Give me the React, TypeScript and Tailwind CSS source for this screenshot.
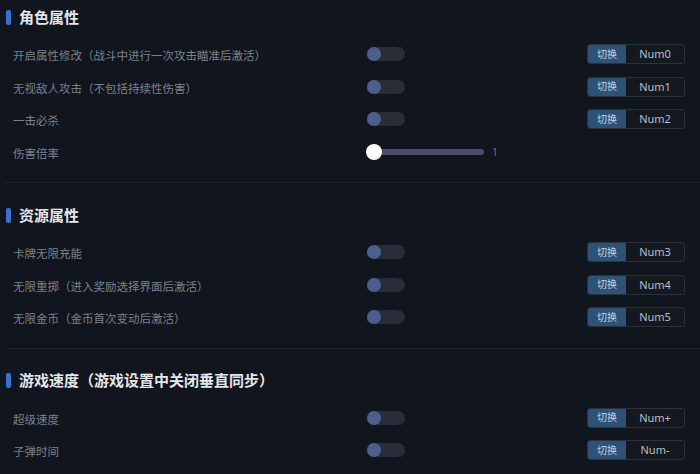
import React from 'react';

type Row =
  | { label: string; kind: 'toggle'; hotkey: string }
  | { label: string; kind: 'slider'; value: number };

const sections: { title: string; rows: Row[] }[] = [
  {
    title: '角色属性',
    rows: [
      { label: '开启属性修改（战斗中进行一次攻击瞄准后激活）', kind: 'toggle', hotkey: 'Num0' },
      { label: '无视敌人攻击（不包括持续性伤害）', kind: 'toggle', hotkey: 'Num1' },
      { label: '一击必杀', kind: 'toggle', hotkey: 'Num2' },
      { label: '伤害倍率', kind: 'slider', value: 1 },
    ],
  },
  {
    title: '资源属性',
    rows: [
      { label: '卡牌无限充能', kind: 'toggle', hotkey: 'Num3' },
      { label: '无限重掷（进入奖励选择界面后激活）', kind: 'toggle', hotkey: 'Num4' },
      { label: '无限金币（金币首次变动后激活）', kind: 'toggle', hotkey: 'Num5' },
    ],
  },
  {
    title: '游戏速度（游戏设置中关闭垂直同步）',
    rows: [
      { label: '超级速度', kind: 'toggle', hotkey: 'Num+' },
      { label: '子弹时间', kind: 'toggle', hotkey: 'Num-' },
    ],
  },
];

function Toggle() {
  return (
    <div className="w-[38px] h-[14px] rounded-full bg-[#292d37] flex items-center">
      <div className="w-[14px] h-[14px] rounded-full bg-[#4b5e8c]" />
    </div>
  );
}

function Hotkey({ keyName }: { keyName: string }) {
  return (
    <div className="flex h-[20px] w-[98px] rounded-[3px] border border-[#2b323d] overflow-hidden">
      <div className="w-[38px] bg-[#2d5276] text-[#c9d3df] text-[10px] flex items-center justify-center">切换</div>
      <div className="flex-1 bg-[#141920] text-[#b9bec7] text-[11px] flex items-center justify-center">{keyName}</div>
    </div>
  );
}

function Slider({ value }: { value: number }) {
  return (
    <div className="flex items-center">
      <div className="relative w-[117px] h-[6px] rounded-full bg-[#4a4b68]">
        <div className="absolute -left-[1px] -top-[5px] w-[16px] h-[16px] rounded-full bg-white" />
      </div>
      <span className="ml-[8px] text-[11px] text-[#3d6fd4]">{value}</span>
    </div>
  );
}

export default function App() {
  return (
    <div
      className="w-[700px] h-[474px] overflow-hidden bg-[#11151d]"
      style={{ fontFamily: '"Noto Sans", "Noto Sans CJK SC", sans-serif' }}
    >
      {sections.map((section, i) => (
        <div key={section.title}>
          {i > 0 && (
            <div className="ml-[6px] mt-[14px] mb-[15px] h-px bg-[#1d222c]" />
          )}
          {/* Section heading */}
          <div className="h-[34px] flex items-center pl-[6px]">
            <div className="w-[5px] h-[15px] rounded-[2px] bg-[#3b6fd8]" />
            <h2 className="ml-[8px] text-[15px] font-bold text-[#e3e6eb]">{section.title}</h2>
          </div>
          <div className="mt-[4px]">
            {section.rows.map((row) => (
              <div key={row.label} className="h-[32.5px] flex items-center">
                <div className="w-[367px] pl-[13px] pt-[3px] text-[11.5px] text-[#7c818a]">{row.label}</div>
                {row.kind === 'toggle' ? (
                  <>
                    <Toggle />
                    <div className="ml-auto mr-[15px]">
                      <Hotkey keyName={row.hotkey} />
                    </div>
                  </>
                ) : (
                  <Slider value={row.value} />
                )}
              </div>
            ))}
          </div>
        </div>
      ))}
    </div>
  );
}
